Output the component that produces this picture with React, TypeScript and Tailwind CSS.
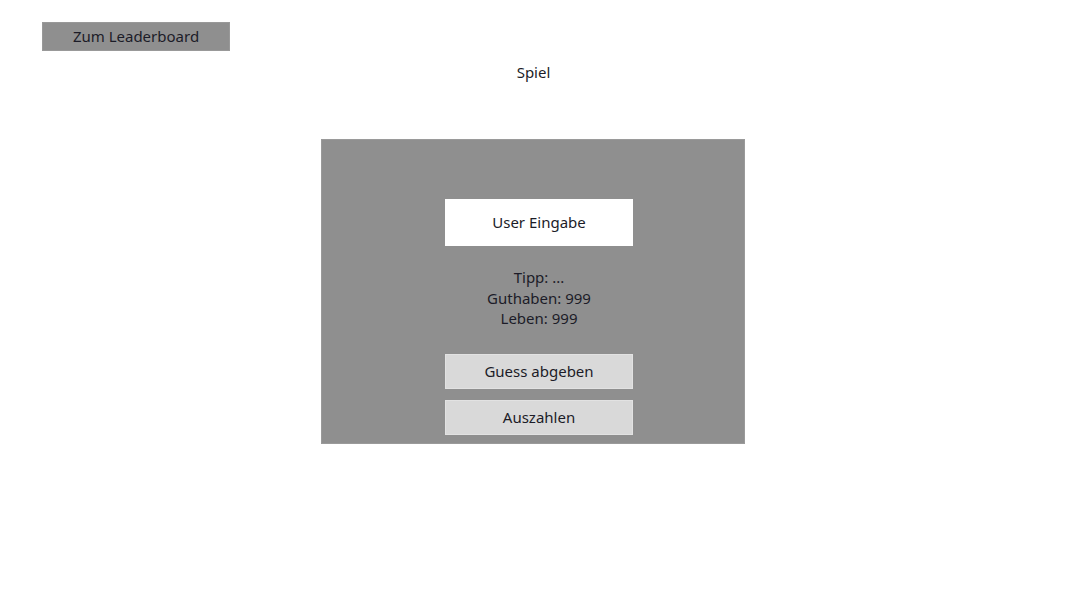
export default function App() {
  return (
    <div className="min-h-[595px] w-full bg-white text-[15px] text-[#1c1c28]" style={{ fontFamily: '"Noto Sans", "Open Sans", sans-serif' }}>
      <div className="pl-[42px] pt-[22px]">
        <button className="h-[29px] w-[188px] border border-[#999] bg-[#8f8f8f] text-[15px] leading-none">
          Zum Leaderboard
        </button>
      </div>
      <p className="mt-[11px] text-center leading-[20px]">Spiel</p>
      <div className="ml-[321px] mt-[57px] h-[305px] w-[424px] border border-[#9a9a9a] bg-[#8f8f8f] pl-[123px]">
        <div className="flex w-[188px] flex-col items-center">
          <div className="mt-[59px] flex h-[47px] w-[188px] items-center justify-center bg-white">User Eingabe</div>
          <div className="mt-[21px] text-center leading-[20.5px]">
            <p>Tipp: ...</p>
            <p>Guthaben: 999</p>
            <p>Leben: 999</p>
          </div>
          <button className="mt-[25px] h-[35px] w-[188px] border border-[#e2e2e2] bg-[#d9d9d9] leading-none">Guess abgeben</button>
          <button className="mt-[11px] h-[35px] w-[188px] border border-[#e2e2e2] bg-[#d9d9d9] leading-none">Auszahlen</button>
        </div>
      </div>
    </div>
  );
}
